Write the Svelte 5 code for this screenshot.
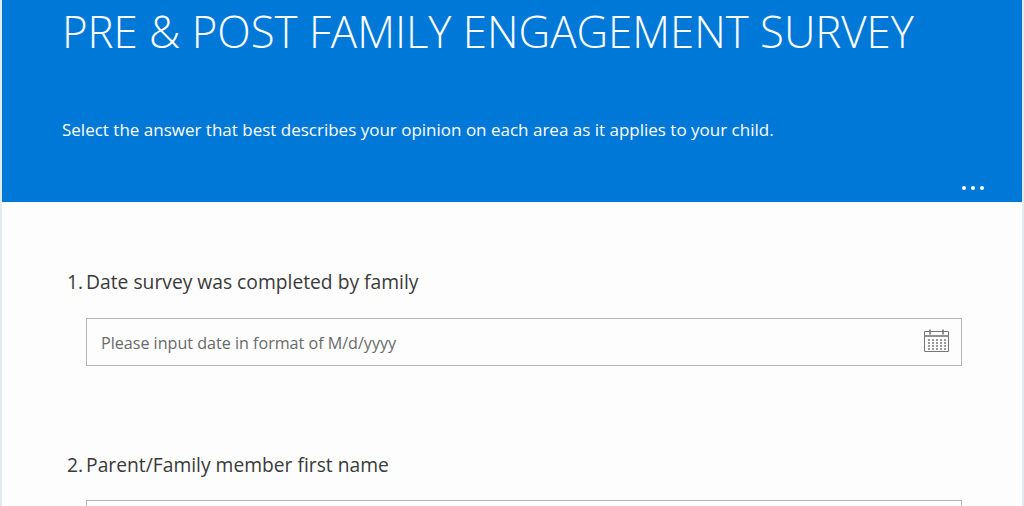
<script>
    const title = "PRE & POST FAMILY ENGAGEMENT SURVEY";
    const subtitle = "Select the answer that best describes your opinion on each area as it applies to your child.";

    // dots of the calendar grid
    const calCols = [6, 10, 14, 18, 22];
    const calRows = [10, 13, 16, 19];
</script>

<div class="page">
    <header class="banner">
        <h1>{title}</h1>
        <p class="sub">{subtitle}</p>
        <div class="more" aria-label="More options">
            <span></span><span></span><span></span>
        </div>
    </header>

    <main class="body">
        <section class="question first">
            <div class="label"><span class="num">1.</span><span>Date survey was completed by family</span></div>
            <div class="input">
                <span class="placeholder">Please input date in format of M/d/yyyy</span>
                <svg class="cal" width="27" height="26" viewBox="0 0 27 26" fill="none" stroke="#757575">
                    <path d="M2.5 2.5h24v20h-24z" />
                    <path d="M2.5 7h24" stroke-width="1.6" />
                    <path d="M8 0.5v5M21 0.5v5" stroke-width="1.6" />
                    {#each calRows as y}
                        {#each calCols as x}
                            <rect class="dot" x={x} y={y} width="2" height="2" />
                        {/each}
                    {/each}
                </svg>
            </div>
        </section>

        <section class="question">
            <div class="label"><span class="num">2.</span><span>Parent/Family member first name</span></div>
            <div class="input"></div>
        </section>
    </main>
</div>

<style>
    :global(body){
        margin: 0;
        overflow: hidden;
    }

    .page{
        height: 506px;
        overflow: hidden;
        background-color: #e3ebf2;
        padding: 0 2px;
        font-family: "Open Sans", "Liberation Sans", sans-serif;
    }

    .banner{
        position: relative;
        height: 202px;
        background-color: #0078d7;
        color: #fff;
        padding-left: 60px;
        box-sizing: border-box;
    }

    h1{
        margin: 0;
        padding-top: 6px;
        font-size: 43.75px;
        line-height: 50px;
        font-weight: 300;
        white-space: nowrap;
    }

    .sub{
        margin: 0;
        padding-top: 57px;
        font-size: 17px;
        line-height: 34px;
    }

    .more{
        position: absolute;
        right: 38px;
        top: 186px;
        display: flex;
        gap: 5px;
    }

    .more span{
        width: 4px;
        height: 4px;
        border-radius: 50%;
        background-color: #fff;
    }

    .body{
        background-color: #fdfdfd;
        height: 304px;
        padding-left: 65px;
        padding-right: 60px;
    }

    .question{
        padding-top: 84px;
    }

    .question.first{
        padding-top: 65px;
    }

    .label{
        display: flex;
        gap: 3px;
        font-size: 19.25px;
        line-height: 30px;
        color: #3a3a3a;
    }

    .input{
        display: flex;
        align-items: center;
        justify-content: space-between;
        margin-top: 20px;
        margin-left: 19px;
        height: 48px;
        box-sizing: border-box;
        border: 1px solid #b5b5b5;
        padding: 0 12px 0 14px;
    }

    .question.first .input{
        margin-top: 21px;
    }

    .placeholder{
        font-size: 16.1px;
        line-height: 22px;
        padding-top: 2px;
        color: #6a6a6a;
    }

    .dot{
        fill: #9a9a9a;
        stroke: none;
    }
</style>
